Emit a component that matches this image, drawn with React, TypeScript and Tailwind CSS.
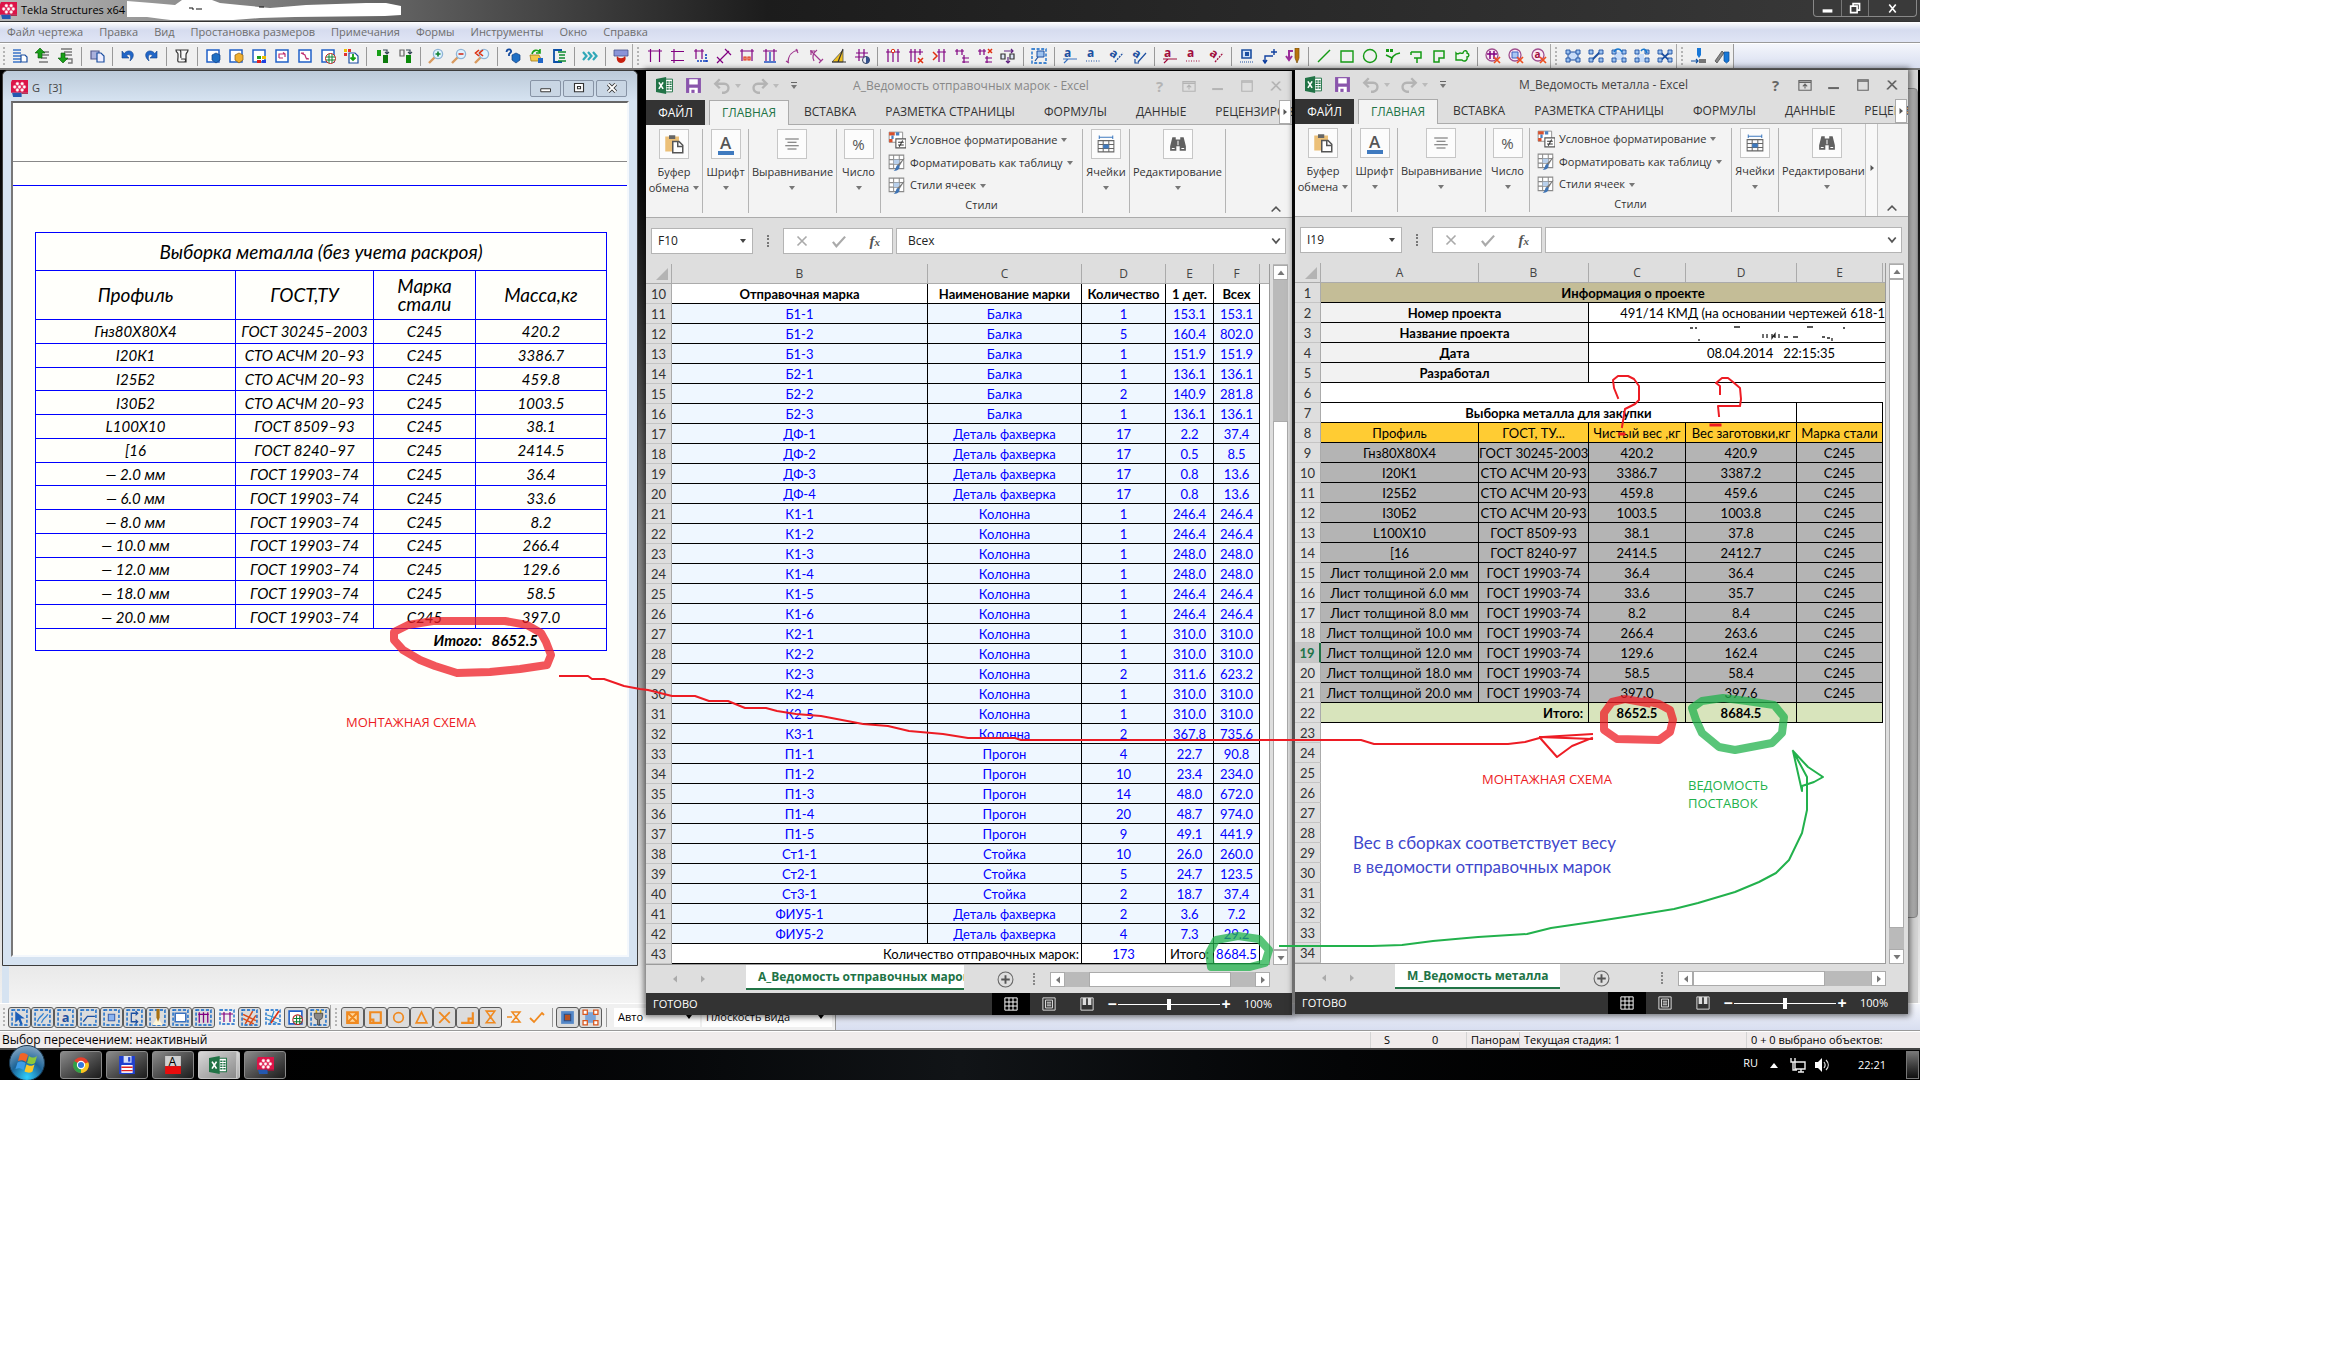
import type { ReactNode } from 'react'

/* ---------- small drawing helpers (16x16 grid) ---------- */

function Glyph({ children, size = 'h-[18px] w-[18px]' }: { children: ReactNode; size?: string }) {
  return (
    <svg viewBox="0 0 16 16" className={`${size} shrink-0`} fill="none" aria-hidden="true">
      {children}
    </svg>
  )
}

function L({ d, c = '#333', w = 1.2, f = 'none', dash }: { d: string; c?: string; w?: number; f?: string; dash?: string }) {
  return <path d={d} stroke={c} strokeWidth={w} fill={f} strokeDasharray={dash} />
}

const NAVY = '#1c4fa0'
const PURPLE = '#800080'
const GREEN = '#159a15'
const RED = '#e03010'

const dashBox = <L d="M1 1h14v14H1z" c="#0a64c8" dash="3 1.6" w={1.3} />
const cubes = <path d="M7 7l4-2 4 2v5l-4 3-4-3z" fill="#1f6fc4" stroke="#123f80" strokeWidth=".7" />
const frame = <L d="M2 2h12v12H2z" c="#2060c8" f="#fff" w={1.5} />

function lens(mark: ReactNode) {
  return (
    <>
      <L d="M1 15l6-6" c="#d89a60" w={2.4} />
      <circle cx="10" cy="6" r="4.6" fill="#dff2ff" stroke="#8fb4d6" strokeWidth="1.3" />
      {mark}
    </>
  )
}

function letterA(c: string, extra: ReactNode, turn?: boolean) {
  return (
    <>
      <text x="2" y="9" fill={c} fontSize="12" fontWeight="700" fontFamily="Open Sans, sans-serif" transform={turn ? 'rotate(35 5 6)' : undefined}>a</text>
      {extra}
    </>
  )
}

function redrawn(inner: ReactNode) {
  return (
    <>
      <circle cx="7" cy="7" r="6" stroke="#a05090" fill="#fbe9f4" strokeWidth="1.3" />
      {inner}
      <L d="M9 9l6 6M15 9l-6 6" c="#f05020" w={1.7} />
    </>
  )
}

function handles(inner: ReactNode) {
  return (
    <>
      {inner}
      <path d="M1 2h4v4H1zM11 2h4v4h-4zM1 10h4v4H1zM11 10h4v4h-4z" fill="#9cc2f0" stroke={NAVY} strokeWidth=".9" />
    </>
  )
}

type Tool = { name: string; icon: ReactNode; on?: boolean } | '|' | ':'

const topTools: Tool[] = [
  ':',
  { name: 'Список чертежей', icon: <><L d="M1 2h8M1 5h8M1 8h8M1 11h8M1 14h8" c="#3b74c8" w={1.4} /><L d="M9 7h4l2 2v5H9z" c={NAVY} f="#fff" /></> },
  { name: 'Предыдущий чертёж', icon: <><L d="M6 4h8M6 7h8M6 10h6M4 14h9" c="#777" w={1.4} /><path d="M5 0l5 5H7v5H3V5H0z" fill="#18a018" stroke="#075007" strokeWidth=".6" /></> },
  { name: 'Следующий чертёж', icon: <><L d="M3 1h11M6 4h8M6 7h8M8 11h6v4h-4" c="#777" w={1.4} /><path d="M5 15l5-5H7V5H3v5H0z" fill="#18a018" stroke="#075007" strokeWidth=".6" /></> },
  '|',
  { name: 'Сохранить', icon: <><L d="M2 3h8v8H2z" c="#555a90" f="#aab0dc" /><L d="M8 5h4l3 3v6H8z" c={NAVY} f="#eef" /></> },
  '|',
  { name: 'Отменить', icon: <path d="M2 3v7h7L6.500 7.800C9 5 12 7 10 13c6-5 3-11-2-10-2 .5-3 1.500-3.800 2.600z" fill="#2166c8" stroke="#12438c" strokeWidth=".6" /> },
  { name: 'Повторить', icon: <path d="M14 3v7H7l2.500-2.200C7 5 4 7 6 13 0 8 3 2 8 3c2 .5 3 1.500 3.800 2.600z" fill="#2166c8" stroke="#12438c" strokeWidth=".6" /> },
  '|',
  { name: 'Свойства', icon: <L d="M2 2h12c0 3-2 2-2 5v7H5c-2 0-1-3-1-5V6c0-2-2-1-2-4zM6 2c2 2 0 4 1 8M10 14c2 0 2-2 1-3H7" c="#333" f="#f8f8f8" /> },
  '|',
  { name: 'Вид модели', icon: <>{frame}{cubes}</> },
  { name: 'Вид по рамке', icon: <>{frame}<path d="M7 7l4-2 4 2v5l-4 3-4-3z" fill="#f0b030" stroke="#8a5a10" strokeWidth=".7" /></> },
  { name: 'Легенда', icon: <>{frame}<path d="M6 8h4v3H6z" fill="#20a020" /><path d="M11 8h4v3h-4z" fill="#f0c000" /><path d="M6 12h4v3H6z" fill="#e02020" /><path d="M11 12h4v3h-4z" fill="#2040e0" /></> },
  { name: 'Перенести', icon: <>{frame}<L d="M5 10V6h6v3M5 10h4M11 6L9 4.500" c="#c03070" /></> },
  { name: 'Масштаб вида', icon: <>{frame}<L d="M4 5l4 2 1 3 3 1M4 5h3M12 11H9" c="#c03070" /></> },
  { name: 'Сетка вида', icon: <>{frame}<circle cx="10.500" cy="10.500" r="5" fill="#fff" stroke="#c02020" /><L d="M6 9h9M6 12h9M9 6v9M12 6v9" c="#108030" w={1} /></> },
  { name: 'Обновить вид', icon: <><L d="M6 5h6l3 3v7H6z" c={NAVY} f="#fff" /><path d="M1 1h3v3H1z" fill="#f0c000" /><path d="M5 1h3v3H5zM1 5h3v3H1z" fill="#e03030" /><L d="M10 6v6M7.500 9.500L10 12l2.500-2.500" c="#10a010" w={1.8} /></> },
  '|',
  { name: 'Клонировать', icon: <><path d="M3 2h4v6H3z" fill="#18a018" /><path d="M9 7h5v8H9z" fill="#0c7a0c" /><L d="M9 2h4v3M11 4l2 2 2-2" c="#345" /></> },
  { name: 'Клонировать выбранное', icon: <><L d="M3 2h4v6H3z" c="#666" f="#eee" /><path d="M9 7h5v8H9z" fill="#0c8a0c" /><L d="M9 2h4v3M11 4l2 2 2-2" c="#345" /></> },
  '|',
  { name: 'Увеличить', icon: lens(<L d="M10 3.500v5M7.500 6h5" c="#108030" w={1.6} />) },
  { name: 'Уменьшить', icon: lens(<L d="M7.500 6h5" c="#d03020" w={1.6} />) },
  { name: 'Исходный масштаб', icon: lens(<L d="M5 2L1.500 5 5 8M9 2L5.500 5 9 8" c={RED} w={1.6} />) },
  '|',
  { name: 'Запрос объекта', icon: <><L d="M1.500 4C2 0 7 1 6 4L4 6v2" c="#124aa0" w={1.8} />{cubes}</> },
  { name: 'Открыть модель', icon: <><path d="M2 7h9l3 6H3z" fill="#f2c84c" stroke="#a07818" strokeWidth=".8" /><L d="M4 6c1-4 5-5 8-2M12 1v4H8" c="#18a018" w={1.6} /><path d="M10 10h5v5h-5z" fill="#2166c8" /></> },
  { name: 'Отчёт', icon: <><L d="M11 2H3v12h8" c="#0a50a8" w={1.8} /><L d="M7 4h8M8 7h6M8 10h6M7 13h8" c="#0f8a30" w={1.7} /></> },
  '|',
  { name: 'Дополнительно', icon: <L d="M1 4l3.500 4L1 12M6 4l3.500 4L6 12M11 4l3.500 4L11 12" c="#30a8b8" w={2.200} /> },
  '|',
  { name: 'Tekla Web', icon: <><path d="M1 2h14v6H1z" fill="#8a94d8" stroke="#44508c" strokeWidth=".8" /><path d="M4 8c2 3 6 3 8 0 2 4-1 7-4 7S3 12 4 8z" fill="#c82010" /></> },
  ':',
  { name: 'Размер по горизонтали', icon: <L d="M1 3h14M3.500 1v13M12.500 1v13" c={PURPLE} /> },
  { name: 'Размер по вертикали', icon: <L d="M4 1v14M1 3.500h13M1 12.500h13" c={PURPLE} /> },
  { name: 'Ортогональный размер', icon: <><L d="M1 3h10M3 1v10M9 1v10" c={PURPLE} /><L d="M13 6v9M4 13h11" c="#1040c0" dash="2 1" w={1.6} /></> },
  { name: 'Свободный размер', icon: <L d="M3 13L13 3M1 9l6 6M9 1l6 6M1 15l2-2" c={PURPLE} /> },
  { name: 'Размер по точкам', icon: <><L d="M1 3h14M3 1v12M13 1v12" c={PURPLE} /><L d="M5 9h2v3H5zM9 9h2v3H9z" c={RED} /></> },
  { name: 'Размер сетки', icon: <><L d="M1 3h14M4 1v12M12 1v12" c={PURPLE} /><L d="M8 4v9M2 14h12" c="#2050c0" w={1.4} /></> },
  { name: 'Радиус', icon: <L d="M3 15C3 7 8 3 13 2M1 13l3 2M11 1l2 4" c="#a03890" /> },
  { name: 'Радиальный размер', icon: <L d="M3 3l10 10M2 3h5M3 2v5M11 15l4-4M9 2C5 5 4 9 6 13" c="#a03890" /> },
  { name: 'Угол', icon: <><path d="M1 14L12 2v12z" fill="#f0c020" stroke="#555" strokeWidth=".8" /><L d="M1 14h14M12 1l-5 13" c="#333" /></> },
  { name: 'Добавить размер', icon: <><L d="M1 9h9M5 1v12M10 1v8M2 5h12" c={PURPLE} /><circle cx="12" cy="12" r="3.500" fill="#e8e8f4" stroke="#33405c" /><path d="M12 8.500v7a3.500 3.500 0 0 0 0-7z" fill="#33508c" /></> },
  '|',
  { name: 'Добавить точку', icon: <><L d="M1 4h14M3 1v13M8 3v11M13 1v13" c={PURPLE} /><circle cx="8" cy="3" r="1.700" fill="#fff" stroke={RED} /></> },
  { name: 'Удалить точку', icon: <><L d="M1 4h14M3 1v13M7 1v13M12 1v6" c={PURPLE} /><L d="M10 10l5 5M15 10l-5 5" c={RED} w={1.5} /></> },
  { name: 'Сдвинуть размер', icon: <><L d="M6 4h9M8 1v13M13 1v13" c={PURPLE} /><L d="M2 4l4 4-4 4" c={RED} w={1.5} /></> },
  { name: 'Объединить', icon: <L d="M1 3h9M3 1v6M8 1v6M10 7v8M8 10h7M8 14h7" c={PURPLE} /> },
  { name: 'Разделить', icon: <><L d="M1 3h8M3 1v6M7 1v6M10 8v7M8 10h7M8 14h7" c={PURPLE} /><L d="M11 1l4 4M15 1l-4 4" c={RED} w={1.5} /></> },
  { name: 'Связать размеры', icon: <><L d="M1 6h4v5H1zM10 6h4v5h-4z" c="#333" f="#dde4f4" /><L d="M4 3h9M11 1l2 2-2 2M8 9v6M6 13l2 2 2-2" c="#602080" /></> },
  '|',
  { name: 'Марка детали', icon: <>{dashBox}<path d="M6 3h7v6H6z" fill="#9cc2f0" stroke={NAVY} /><L d="M4 13l3-4" c={NAVY} /></> },
  '|',
  { name: 'Текст с выноской', icon: letterA(NAVY, <L d="M2 15l4-4h9M1 11h5" c="#3a72c0" />) },
  { name: 'Текст', icon: letterA(NAVY, <L d="M1 13h14" c={NAVY} dash="1 1.500" />) },
  { name: 'Текст вдоль линии', icon: letterA(NAVY, <L d="M7 14l8-9" c={NAVY} dash="2 1" />, true) },
  { name: 'Текст с поворотом', icon: letterA(NAVY, <L d="M7 14l8-9M4 11v4h4" c={NAVY} />, true) },
  '|',
  { name: 'Сварной шов', icon: letterA('#a00c3c', <L d="M2 15l4-4h9M1 11h5" c="#a00c3c" />) },
  { name: 'Метка шва', icon: letterA('#a00c3c', <L d="M1 13h14" c="#a00c3c" dash="1 1.500" />) },
  { name: 'Метка вдоль шва', icon: letterA('#a00c3c', <L d="M7 14l8-9" c="#a00c3c" dash="2 1" />, true) },
  '|',
  { name: 'Символ', icon: <><L d="M3 2h9v8H3z" c={NAVY} f="#cfe0f8" w={1.6} /><path d="M6 4h4v4H6z" fill={NAVY} /><L d="M1 14h14" c={NAVY} dash="1 1" /></> },
  { name: 'Отметка уровня', icon: <L d="M3 15V8h8M1 12l2 3 2-3M12 1v6M9 4h6" c="#1040a0" w={1.4} /> },
  { name: 'Ревизия', icon: <><L d="M8 3H4v8M1 8l3 4 3-4" c="#9a2c9a" w={2} /><path d="M10 0h4v10l-2 5-2-5z" fill="#b8740c" stroke="#7a5010" strokeWidth=".7" /></> },
  '|',
  { name: 'Линия', icon: <L d="M2 14L14 2" c={GREEN} w={1.4} /> },
  { name: 'Прямоугольник', icon: <L d="M2 3h12v11H2z" c={GREEN} w={1.4} /> },
  { name: 'Окружность', icon: <circle cx="8" cy="8" r="6.500" stroke={GREEN} strokeWidth="1.400" /> },
  { name: 'Дуга', icon: <><L d="M6 15c0-5 3-9 9-10M1 7l6 3" c={GREEN} w={1.5} /><path d="M1 1h3v3H1zM5 1h3v3H5z" fill={GREEN} /></> },
  { name: 'Полилиния', icon: <L d="M3 4h10v6H9v5M3 4v3M6 10h3" c={GREEN} w={1.5} /> },
  { name: 'Многоугольник', icon: <L d="M3 3h10v7H8v4H3z" c={GREEN} w={1.5} /> },
  { name: 'Облако', icon: <L d="M2 12V5c2 2 3 0 4 0s1 1 3 0c1-4 5-2 4 0 3 1 2 4 0 4 1 4-3 5-5 3H4z" c={GREEN} w={1.4} f="#eef8ee" /> },
  '|',
  { name: 'Переразметить размеры', icon: redrawn(<L d="M2 6h10M5 3v8M9 3v8" c={PURPLE} w={1.500} />) },
  { name: 'Переразметить марки', icon: redrawn(<path d="M4 4h6v6H4z" fill="#a9c8f4" stroke="#4060c0" />) },
  { name: 'Переразметить тексты', icon: redrawn(<text x="3.500" y="10" fill="#a00c3c" fontSize="10" fontWeight="700" fontFamily="Open Sans, sans-serif">a</text>) },
  ':',
  { name: 'Прямоугольная область', icon: handles(<path d="M3 4h10v8H3z" fill="#c8dcf8" stroke={NAVY} />) },
  { name: 'Подогнать область', icon: handles(<L d="M4 12l8-8" c={NAVY} w={2} />) },
  { name: 'Повернуть область', icon: <>{handles(<path d="M3 4h10v8H3z" fill="#c8dcf8" />)}<L d="M3 4c2-4 6-4 8 0" c="#1878d0" w={1.600} /></> },
  { name: 'Копировать область', icon: <>{handles(<path d="M3 6h7v8H3z" fill="#c8dcf8" />)}<L d="M7 3c2-3 5-2 6 2" c="#1878d0" w={1.600} /></> },
  { name: 'Разнести область', icon: handles(<L d="M3 4l10 9M13 4L3 13" c={NAVY} w={1.700} />) },
  ':',
  { name: 'Сверло', icon: <><path d="M6 0h4v7L8 10 6 7z" fill="#1878d8" /><path d="M8 11h7v4H8z" fill="#777" /><L d="M0 13h7M5 11l2 2-2 2" c="#1050a0" /></> },
  { name: 'Болт', icon: <><path d="M1 13L8 3l2 2-7 10z" fill="#888" stroke="#444" strokeWidth=".7" /><path d="M10 4h5v9l-2.500 2L10 13z" fill="#1878d8" stroke="#104a90" strokeWidth=".7" /></> },
]

function snapIcon(inner: ReactNode) {
  return <>{dashBox}{inner}</>
}

const ORANGE = '#f08a20'

const bottomTools: Tool[] = [
  ':',
  { name: 'Выбрать всё', on: true, icon: snapIcon(<path d="M4 2l9 7H9l2 5-2 1-2-5-3 3z" fill="#1c5fb8" />) },
  { name: 'Выбрать линии', on: true, icon: snapIcon(<L d="M3 12c2-6 4-4 6-8M7 13c2-6 4-4 6-8" c="#3080d0" />) },
  { name: 'Выбрать текст', on: true, icon: snapIcon(<text x="4.500" y="12" fill={NAVY} fontSize="12" fontWeight="700" fontFamily="Open Sans, sans-serif">a</text>) },
  { name: 'Выбрать метки', on: true, icon: snapIcon(<L d="M3 12l4-5h7" c={NAVY} />) },
  { name: 'Выбрать детали', on: true, icon: snapIcon(<path d="M5 5h6v6H5z" fill="#8ab4f0" stroke="#3a62b0" />) },
  { name: 'Выбрать сечения', on: true, icon: snapIcon(<L d="M10 4H5v8h5M9 2l2 2-2 2M9 10l2 2-2 2" c={NAVY} />) },
  { name: 'Выбрать швы', on: true, icon: snapIcon(<><path d="M8 8l5 7H3z" fill="#fff6d8" /><path d="M7 0h3v8l-1.500 4L7 8z" fill="#a87010" /></>) },
  { name: 'Выбрать виды', on: true, icon: snapIcon(<L d="M3 4h10v8H3z" c="#3a72c0" f="#fff" w={1.500} />) },
  { name: 'Выбрать размеры', on: true, icon: snapIcon(<L d="M3 5h10M4 3v10M8 3v10M12 3v10" c={PURPLE} />) },
  { name: 'Выбрать один размер', icon: snapIcon(<L d="M2 5h12M5 3v10M11 3v10" c={PURPLE} />) },
  { name: 'Выбрать сетки', on: true, icon: snapIcon(<L d="M4 14l7-12M8 15l6-9M2 5l12 6M2 9l10 5" c="#d84818" w={1.400} />) },
  { name: 'Выбрать линию сетки', icon: snapIcon(<><L d="M2 6l12 4M2 10l10 4M5 14l4-12" c="#3090d0" /><L d="M6 14l8-12" c={RED} w={1.600} /></>) },
  { name: 'Выбрать символы', on: true, icon: <>{frame}<circle cx="10" cy="10" r="4.500" fill="#fff" stroke="#c02020" /><L d="M6 9h8M6 12h8M9 6v8M12 6v8" c="#108030" w={1} /></> },
  { name: 'Выбрать плагины', on: true, icon: snapIcon(<><L d="M6 4V1M10 4V1" c="#d8a818" w={1.500} /><path d="M4 4h8c0 5-1 6-3 6v5H7v-5C5 10 4 9 4 4z" fill="#888" stroke="#333" strokeWidth=".7" /></>) },
  ':',
  { name: 'Привязка к точкам', on: true, icon: <L d="M3 3h10v10H3zM3 3l10 10M13 3L3 13" c={ORANGE} w={2} f="#ffd9a0" /> },
  { name: 'Привязка к концам', on: true, icon: <L d="M3 3h10v10H3zM3 10h3v3" c={ORANGE} w={2} /> },
  { name: 'Привязка к центру', on: true, icon: <circle cx="8" cy="8" r="4.500" stroke={ORANGE} strokeWidth="1.600" /> },
  { name: 'Привязка к середине', on: true, icon: <L d="M8 3l5 10H3z" c={ORANGE} w={1.600} /> },
  { name: 'Привязка к пересечению', on: true, icon: <L d="M3 3l10 10M13 3L3 13" c={ORANGE} w={1.700} /> },
  { name: 'Привязка по перпендикуляру', on: true, icon: <L d="M2 13h11V3M9 13V9h4" c={ORANGE} w={2} /> },
  { name: 'Привязка к ближайшей', on: true, icon: <L d="M4 2h8l-8 11h8z" c={ORANGE} w={1.500} /> },
  { name: 'Привязка к продолжению', icon: <L d="M6 3h8l-8 10h8zM1 8h5" c={ORANGE} w={1.500} /> },
  { name: 'Свободная привязка', icon: <L d="M1 9l4 4 8-9 2 2" c={ORANGE} w={1.800} /> },
  '|',
  { name: 'Привязка к линиям', on: true, icon: <><path d="M2 2h12v12H2z" fill="#5588c8" /><path d="M5 5h6v6H5z" fill="#b85020" stroke="#2a4a80" /></> },
  { name: 'Привязка к опорным линиям', on: true, icon: <><path d="M3 3h10v10H3z" fill="#7aa4d8" /><L d="M1 1h4v4H1zM11 1h4v4h-4zM1 11h4v4H1zM11 11h4v4h-4z" c="#d85820" f="#fff" /></> },
  '|',
]

function Toolbar({ tools }: { tools: Tool[] }) {
  return (
    <>
      {tools.map((t, i) =>
        t === '|' ? (
          <span key={i} className="flex w-2 shrink-0 justify-center"><span className="h-[19px] w-px bg-[#999]" /></span>
        ) : t === ':' ? (
          <span key={i} className="flex h-6 w-[11px] shrink-0 items-center justify-center border-l border-[#a8a8a8] first:w-2 first:border-l-0">
            <span className="h-[18px] border-l-2 border-dotted border-[#b4b4b4]" />
          </span>
        ) : (
          <button
            key={i}
            type="button"
            aria-label={t.name}
            className={t.on
              ? 'flex h-[21px] w-[23px] shrink-0 items-center justify-center rounded-[3px] border border-[#5c5c5c] bg-[#dcdcdc]'
              : 'flex h-[21px] w-[23px] shrink-0 items-center justify-center'}
          >
            <Glyph size={t.on ? 'h-[17px] w-[17px]' : 'h-4 w-4'}>{t.icon}</Glyph>
          </button>
        ),
      )}
    </>
  )
}

function TeklaLogo() {
  return (
    <Glyph size="h-[17px] w-[17px]">
      <path d="M1 0h15v12H0V2z" fill="#dc1448" />
      <path d="M1 12h9v4H2z" fill="#2458b0" />
      <path d="M10 12h6v1h-6z" fill="#a81038" />
      <g fill="#fff" stroke="#f7b4c4" strokeWidth=".5">
        <circle cx="6" cy="3.500" r="1.400" /><circle cx="10.500" cy="3.500" r="1.400" />
        <circle cx="3.500" cy="6.500" r="1.400" /><circle cx="8" cy="6.500" r="1.400" /><circle cx="12.500" cy="6.500" r="1.400" />
        <circle cx="6" cy="9.500" r="1.400" /><circle cx="10.500" cy="9.500" r="1.400" />
      </g>
    </Glyph>
  )
}

function ExcelLogo({ size = 'h-[17px] w-[17px]' }: { size?: string }) {
  return (
    <Glyph size={size}>
      <path d="M8 2h7.500v12H8z" fill="#fff" stroke="#217346" strokeWidth=".9" />
      <path d="M10 4h2v1.300h-2zM12.700 4h2v1.300h-2zM10 6.200h2v1.300h-2zM12.700 6.200h2v1.300h-2zM10 8.400h2v1.300h-2zM12.700 8.400h2v1.300h-2zM10 10.600h2v1.300h-2zM12.700 10.600h2v1.300h-2z" fill="#217346" />
      <path d="M0 1.800L9.500 0v16L0 14.200z" fill="#217346" />
      <L d="M2.700 5l4 6.200M6.700 5l-4 6.200" c="#fff" w={1.500} />
    </Glyph>
  )
}

function Caret({ tone = 'text-[#777]' }: { tone?: string }) {
  return (
    <svg viewBox="0 0 6 4" className={`h-[4px] w-[6px] shrink-0 ${tone}`} aria-hidden="true">
      <path d="M0 0h6L3 4z" fill="currentColor" />
    </svg>
  )
}

/* ---------- drawing window ---------- */

const drawingRows = [
  ['Гнз80Х80Х4', 'ГОСТ 30245–2003', '420.2'],
  ['I20К1', 'СТО АСЧМ 20–93', '3386.7'],
  ['I25Б2', 'СТО АСЧМ 20–93', '459.8'],
  ['I30Б2', 'СТО АСЧМ 20–93', '1003.5'],
  ['L100X10', 'ГОСТ 8509–93', '38.1'],
  ['[16', 'ГОСТ 8240–97', '2414.5'],
  ['— 2.0 мм', 'ГОСТ 19903–74', '36.4'],
  ['— 6.0 мм', 'ГОСТ 19903–74', '33.6'],
  ['— 8.0 мм', 'ГОСТ 19903–74', '8.2'],
  ['— 10.0 мм', 'ГОСТ 19903–74', '266.4'],
  ['— 12.0 мм', 'ГОСТ 19903–74', '129.6'],
  ['— 18.0 мм', 'ГОСТ 19903–74', '58.5'],
  ['— 20.0 мм', 'ГОСТ 19903–74', '397.0'],
]

function DrawingWindow() {
  const button = 'flex h-[17px] w-[31px] items-center justify-center rounded-[2px] border border-[#8793a5] bg-[#c9d6e4] text-[#333]'
  const cell = 'border border-[#0000ff] p-0 text-center font-normal whitespace-nowrap'
  return (
    <section className="flex w-[636px] shrink-0 flex-col rounded-t-md border border-[#3c3c3c] bg-[#d6e3f1] px-2 pb-2">
      <header className="-mx-2 flex h-[30px] items-center rounded-t-md bg-linear-to-b from-[#bccad9] to-[#d6e3f1] pt-1 pr-[10px] pl-2">
        <TeklaLogo />
        <h2 className="ml-1 flex-1 whitespace-pre text-[#444]">G   [3]</h2>
        <div className="flex gap-[2px]">
          <button type="button" aria-label="Свернуть чертёж" className={button}><Glyph size="h-3 w-3"><L d="M1 9h13v4H1z" f="#fff" w={1.300} /></Glyph></button>
          <button type="button" aria-label="Развернуть чертёж" className={button}><Glyph size="h-3 w-3"><L d="M2 2h12v11H2zM6 6h4v3H6z" f="#fff" w={1.500} /></Glyph></button>
          <button type="button" aria-label="Закрыть чертёж" className={button}><Glyph size="h-3 w-3"><L d="M3 3l10 10M13 3L3 13" w={5} /><L d="M3 3l10 10M13 3L3 13" c="#fff" w={2.500} /></Glyph></button>
        </div>
      </header>
      <div className="flex-1 border-2 border-t-[#666] border-r-[#f4f8fc] border-b-[#f4f8fc] border-l-[#777] bg-[#fffffb]">
        <div className="mt-[58px] h-px bg-[#888]" />
        <div className="mt-[23px] h-px bg-[#0000ff]" />
        <table className="mt-[46px] ml-[22px] h-[419px] w-[572px] table-fixed border-collapse font-['Lato',sans-serif] text-[15px] leading-[18px] text-black italic">
          <colgroup>
            <col className="w-[200px]" /><col className="w-[138px]" /><col className="w-[102px]" /><col />
          </colgroup>
          <thead className="text-[19px]">
            <tr className="h-[38px]"><th colSpan={4} className={cell}>Выборка металла (без учета раскроя)</th></tr>
            <tr className="h-[49px]">
              <th className={cell}>Профиль</th>
              <th className={cell}>ГОСТ,ТУ</th>
              <th className={cell}>Марка<br />стали</th>
              <th className={cell}>Масса,кг</th>
            </tr>
          </thead>
          <tbody>
            {drawingRows.map(([profile, gost, mass]) => (
              <tr key={profile} className="h-[23px]">
                <td className={cell}>{profile}</td>
                <td className={cell}>{gost}</td>
                <td className={cell}>С245</td>
                <td className={cell}>{mass}</td>
              </tr>
            ))}
          </tbody>
          <tfoot>
            <tr className="h-[22px] font-bold">
              <td colSpan={4} className="border border-[#0000ff] p-0 pr-[68px] text-right whitespace-pre">Итого:   8652.5</td>
            </tr>
          </tfoot>
        </table>
      </div>
    </section>
  )
}

/* ---------- Excel window ---------- */

const tabs = ['ВСТАВКА', 'РАЗМЕТКА СТРАНИЦЫ', 'ФОРМУЛЫ', 'ДАННЫЕ', 'РЕЦЕНЗИРОВАНИЕ']

function BigCommand({ label, second, width, icon }: { label: string; second?: string; width: string; icon: ReactNode }) {
  return (
    <div className={`flex h-[84px] shrink-0 justify-center border-r border-[#b4b4b4] ${width}`}>
      <button type="button" className="flex flex-col items-center">
        <span className="flex h-[30px] w-[30px] items-center justify-center border border-[#c6c6c6] bg-[#fcfcfc]">{icon}</span>
        <span className="mt-[5px] leading-4 whitespace-nowrap">{label}</span>
        <span className="flex h-4 items-center gap-1 leading-4">{second}<Caret /></span>
      </button>
    </div>
  )
}

function StyleCommand({ label, icon }: { label: string; icon: ReactNode }) {
  return (
    <button type="button" className="flex h-[23px] items-center gap-1">
      <Glyph>{icon}</Glyph>
      <span className="whitespace-nowrap">{label}</span>
      <Caret />
    </button>
  )
}

const brushTable = (
  <>
    <L d="M1 1h13v12H1zM1 5h13M1 9h9M5 1v12M10 1v8" c="#8a8a8a" f="#fff" w={0.900} />
    <path d="M5 5h5v4H5z" fill="#b8d0ec" />
    <path d="M15 3l-5 8-2-1z" fill="#777" />
    <path d="M10 10c1 3-1 5-5 5 2-1 2-4 3-5z" fill="#3f74b4" />
  </>
)

function Ribbon({ scrolled }: { scrolled?: boolean }) {
  return (
    <div className="relative flex h-[93px] overflow-hidden border-b border-[#ababab] bg-[#f3f3f3] pt-1 text-[#333]">
      <BigCommand
        label="Буфер" second="обмена" width="w-[57px]"
        icon={<Glyph size="h-5 w-5"><path d="M1 2h11v12H1z" fill="#ecc078" /><path d="M4 1h5v3H4z" fill="#666" /><L d="M7 6h5l3 3v6H7z" c="#555" f="#fff" /><L d="M11 6v4h4" c="#555" /></Glyph>}
      />
      <BigCommand
        label="Шрифт" width="w-[46px]"
        icon={<span className="flex flex-col items-center text-[17px] leading-[17px] font-semibold text-[#555]">А<span className="h-1 w-4 bg-[#3f7abf]" /></span>}
      />
      <BigCommand
        label="Выравнивание" width="w-[88px]"
        icon={<Glyph><L d="M2 3.500h12M4 6.500h8M2 9.500h12M4 12.500h8" c="#666" w={0.900} /></Glyph>}
      />
      <BigCommand label="Число" width="w-[44px]" icon={<span className="text-[15px] text-[#555]">%</span>} />
      <div className="flex h-[84px] w-[202px] shrink-0 flex-col border-r border-[#b4b4b4] pl-[7px]">
        <StyleCommand label="Условное форматирование" icon={<><path d="M1 1h12v9H1z" fill="#fff" stroke="#8a8a8a" strokeWidth=".8" /><path d="M1 1h5v3H1zM1 7h3v3H1z" fill="#d8502c" /><path d="M7 1h3v3H7zM3 4h2v3H3z" fill="#4a80c0" /><path d="M7 7h9v8H7z" fill="#fff" stroke="#555" /><L d="M9 10h5M9 12.500h5M13 8.500l-3 5.500" c="#333" w={0.900} /></>} />
        <StyleCommand label="Форматировать как таблицу" icon={brushTable} />
        <StyleCommand label="Стили ячеек" icon={brushTable} />
        <p className="-ml-[7px] text-center leading-4">Стили</p>
      </div>
      <BigCommand
        label="Ячейки" width="w-[47px]"
        icon={<Glyph><L d="M2 2h12M2 .5v3M14 .5v3" c="#3f7abf" w={0.900} /><L d="M1 5h14v10H1zM1 8.500h14M1 12h14M5.500 5v10M10.500 5v10" c="#666" w={0.900} /><path d="M5.500 8.500h5V12h-5z" fill="#3f7abf" /></Glyph>}
      />
      <BigCommand
        label="Редактирование" width="w-[96px]"
        icon={<Glyph><path d="M3 2h3v2h4V2h3l2 8v4H9.500v-4h-3v4H1v-4z" fill="#606060" /><L d="M2.500 12h2.500M11 12h2.500M8 5v4" c="#fff" w={0.900} /></Glyph>}
      />
      {scrolled && (
        <button type="button" aria-label="Прокрутить ленту" className="absolute top-0 right-[30px] flex h-full w-[13px] items-center justify-center border-x border-[#c6c6c6] bg-[#f8f8f8] pb-1 text-[#555]">
          <Glyph size="h-2 w-2"><path d="M5 2l7 6-7 6z" fill="#555" /></Glyph>
        </button>
      )}
      <button type="button" aria-label="Свернуть ленту" className="absolute right-[11px] bottom-[3px]">
        <Glyph size="h-[10px] w-[10px]"><L d="M1 12l7-7 7 7" c="#555" w={2.500} /></Glyph>
      </button>
    </div>
  )
}

type ExcelProps = {
  title: string
  place: string
  dim?: boolean
  cellRef: string
  formula: string
  scrolled?: boolean
  sheet: string
  sheetTab: string
  vThumb: ReactNode
  hThumb: ReactNode
  children: ReactNode
}

function ExcelWindow({ title, place, dim, cellRef, formula, scrolled, sheet, sheetTab, vThumb, hThumb, children }: ExcelProps) {
  const ink = dim ? 'text-[#b4b4b4]' : 'text-[#666]'
  const arrow = 'flex h-[15px] w-[15px] shrink-0 items-center justify-center border border-[#ababab] bg-white'
  return (
    <section className={`absolute flex flex-col bg-[#dedede] text-[11px] shadow-[0_0_6px_2px_rgba(0,0,0,0.55)] ${place}`}>
      <header className="flex h-[29px] items-center pr-[2px] pl-[10px]">
        <ExcelLogo />
        <button type="button" aria-label="Сохранить книгу" className="mr-[11px] ml-3">
          <Glyph size="h-[17px] w-[17px]"><path d="M1 1h14v14H1z" fill="#8a55ac" /><path d="M4 2h8v5H4zM4 10h8v5H4z" fill="#fff" /><path d="M6 12h3v3H6z" fill="#8a55ac" /></Glyph>
        </button>
        <button type="button" aria-label="Отменить ввод" className="mr-[10px] flex items-center gap-1">
          <Glyph><L d="M6 2L2 6l4 4M2 6h8c5 0 5 7 0 8H8" c="#b4b4b4" w={2.100} /></Glyph><Caret tone="text-[#bbb]" />
        </button>
        <button type="button" aria-label="Вернуть ввод" className="flex items-center gap-1">
          <Glyph><L d="M10 2l4 4-4 4M14 6H6C1 6 1 13 6 14h2" c="#b4b4b4" w={2.100} /></Glyph><Caret tone="text-[#bbb]" />
        </button>
        <button type="button" aria-label="Настройка панели быстрого доступа" className="ml-3 flex flex-col items-center gap-[2px]">
          <span className="h-px w-[6px] bg-[#666]" /><Caret />
        </button>
        <h2 className={`flex-1 truncate text-center text-xs ${dim ? 'text-[#888]' : 'text-[#444]'}`}>{title}</h2>
        <div className={`flex ${ink}`}>
          <button type="button" aria-label="Справка Excel" className="w-[29px] text-[15px] leading-5 font-bold">?</button>
          {[
            ['Параметры ленты', 'M1 3h14v11H1zM1 5h14M8 12V7M5.500 9.500L8 7l2.500 2.500'],
            ['Свернуть', 'M2 11h11v1H2z'],
            ['Развернуть', 'M2 2h12v12H2zM2 3.500h12'],
            ['Закрыть', 'M3 3l10 10M13 3L3 13M4 3l10 10M12 3L2 13'],
          ].map(([name, d]) => (
            <button key={name} type="button" aria-label={name} className="flex w-[29px] items-center justify-center">
              <Glyph size="h-[14px] w-[14px]"><L d={d} c="currentColor" w={1.300} /></Glyph>
            </button>
          ))}
        </div>
      </header>

      <nav className="relative flex h-[25px] items-stretch overflow-hidden text-xs text-[#333]">
        <button type="button" className="mr-1 w-[59px] shrink-0 bg-[#333] text-white">ФАЙЛ</button>
        <button type="button" className="relative z-10 w-[80px] shrink-0 border border-b-0 border-[#ababab] bg-[#f3f3f3] text-[#217346]">ГЛАВНАЯ</button>
        {tabs.map((t) => (
          <button key={t} type="button" className="shrink-0 border-b border-[#ababab] pr-[14px] pl-[15px]">{t}</button>
        ))}
        <button type="button" aria-label="Следующие вкладки" className="absolute top-0 right-[1px] z-10 flex h-6 w-[12px] items-center justify-center border border-[#ababab] bg-white">
          <Glyph size="h-2 w-2"><path d="M5 2l7 6-7 6z" fill="#555" /></Glyph>
        </button>
      </nav>

      <Ribbon scrolled={scrolled} />

      <div className="flex h-[46px] items-center pr-[6px] pl-[5px] text-xs text-[#222]">
        <div className="relative flex h-[26px] w-[102px] items-center border border-[#b4b4b4] bg-white">
          <input aria-label="Имя ячейки" defaultValue={cellRef} className="w-full bg-transparent pl-[6px] outline-none" />
          <span className="absolute right-[6px]"><Caret tone="text-[#444]" /></span>
        </div>
        <span className="mx-[14px] h-3 border-l-2 border-dotted border-[#777]" />
        <div className="mr-[3px] flex h-[26px] w-[110px] items-center justify-around border border-[#b4b4b4] bg-white">
          <button type="button" aria-label="Отмена"><Glyph size="h-3 w-3"><L d="M2 2l12 12M14 2L2 14" c="#aaa" w={2.200} /></Glyph></button>
          <button type="button" aria-label="Ввод"><Glyph size="h-[14px] w-[14px]"><L d="M1 9l4 5L15 3" c="#aaa" w={2.500} /></Glyph></button>
          <button type="button" className="font-['Liberation_Serif',serif] text-[15px] leading-4 font-bold text-[#555] italic" aria-label="Вставить функцию">f<span className="text-[11px]">x</span></button>
        </div>
        <div className="relative flex h-[26px] min-w-0 flex-1 items-center border border-[#b4b4b4] bg-white">
          <input aria-label="Строка формул" defaultValue={formula} className="w-full bg-transparent pl-[11px] outline-none" />
          <span className="absolute right-1"><Glyph size="h-[10px] w-[10px]"><L d="M2 4l6 7 6-7" c="#555" w={2.800} /></Glyph></span>
        </div>
      </div>

      <div className="flex pr-1">
        <div className="min-w-0 flex-1 overflow-hidden border-r border-b border-[#9b9b9b]">{children}</div>
        <div className="ml-[3px] flex w-[15px] flex-col bg-[#bababa] pt-[1px]">
          <button type="button" aria-label="Прокрутить вверх" className={arrow}><Glyph size="h-2 w-2"><path d="M1 12l7-9 7 9z" fill="#777" /></Glyph></button>
          {vThumb}
          <button type="button" aria-label="Прокрутить вниз" className={arrow}><Glyph size="h-2 w-2"><path d="M1 4l7 9 7-9z" fill="#777" /></Glyph></button>
        </div>
      </div>

      <div className="flex h-7 items-start pr-[22px]">
        <button type="button" aria-label="Предыдущий лист" className="mt-[10px] ml-[25px]"><Glyph size="h-2 w-2"><path d="M12 1L4 8l8 7z" fill="#aaa" /></Glyph></button>
        <button type="button" aria-label="Следующий лист" className="mt-[10px] ml-5"><Glyph size="h-2 w-2"><path d="M4 1l8 7-8 7z" fill="#aaa" /></Glyph></button>
        <button type="button" className={`ml-[39px] h-[25px] overflow-hidden border-b-2 border-[#217346] bg-white text-left text-xs font-bold whitespace-nowrap text-[#217346] ${sheetTab}`}>{sheet}</button>
        <button type="button" aria-label="Новый лист" className="mt-[6px]">
          <Glyph size="h-[17px] w-[17px]"><circle cx="8" cy="8" r="7" stroke="#666" /><L d="M8 4v8M4 8h8" c="#555" w={1.800} /></Glyph>
        </button>
        <span className="mt-2 ml-auto h-3 border-l-2 border-dotted border-[#888]" />
        <div className={`mt-[7px] ml-[15px] flex h-[15px] bg-[#bababa] ${dim ? 'w-[220px]' : 'w-[208px]'}`}>
          <button type="button" aria-label="Прокрутить влево" className={arrow}><Glyph size="h-2 w-2"><path d="M12 1L4 8l8 7z" fill="#777" /></Glyph></button>
          {hThumb}
          <button type="button" aria-label="Прокрутить вправо" className={arrow}><Glyph size="h-2 w-2"><path d="M4 1l8 7-8 7z" fill="#777" /></Glyph></button>
        </div>
      </div>

      <footer className="flex h-[22px] items-center bg-[#333] pr-5 pl-[7px] text-white">
        <span className="flex-1">ГОТОВО</span>
        <button type="button" aria-label="Обычный" className="flex h-[22px] w-[38px] items-center justify-center bg-black">
          <Glyph size="h-[14px] w-[14px]"><L d="M1 1h14v14H1zM1 5.700h14M1 10.300h14M5.700 1v14M10.300 1v14" c="#fff" w={1.100} /></Glyph>
        </button>
        <button type="button" aria-label="Разметка страницы" className="flex h-[22px] w-[38px] items-center justify-center">
          <Glyph size="h-[14px] w-[14px]"><L d="M1 1h14v14H1zM4 3.500h8v9H4zM5.500 6h5M5.500 8h5M5.500 10h5" c="#ddd" w={1.100} /></Glyph>
        </button>
        <button type="button" aria-label="Страничный режим" className="flex h-[22px] w-[38px] items-center justify-center">
          <Glyph size="h-[14px] w-[14px]"><L d="M1 1h14v14H1z" c="#ddd" w={1.100} /><path d="M3 1h4v8H3zM9 1h4v8H9z" fill="#ddd" /></Glyph>
        </button>
        <button type="button" aria-label="Уменьшить масштаб" className="w-3 text-base leading-4 font-bold">−</button>
        <input
          type="range"
          aria-label="Масштаб"
          min={0}
          max={200}
          defaultValue={100}
          className="h-[14px] w-[102px] appearance-none bg-transparent [&::-webkit-slider-runnable-track]:h-px [&::-webkit-slider-runnable-track]:bg-white [&::-webkit-slider-thumb]:mt-[-5px] [&::-webkit-slider-thumb]:h-[11px] [&::-webkit-slider-thumb]:w-1 [&::-webkit-slider-thumb]:appearance-none [&::-webkit-slider-thumb]:bg-white"
        />
        <button type="button" aria-label="Увеличить масштаб" className="w-3 text-base leading-4 font-bold">+</button>
        <span className="ml-3 text-right">100%</span>
      </footer>
    </section>
  )
}

function SheetHead({ letters }: { letters: string[] }) {
  return (
    <thead>
      <tr className="h-5 bg-[#dedede] font-['Open_Sans',sans-serif] text-xs leading-4 text-[#444]">
        <th className="border-r border-b border-[#ababab] p-0">
          <svg viewBox="0 0 12 12" className="ml-[10px] h-3 w-3" aria-hidden="true"><path d="M12 0v12H0z" fill="#b4b4b4" /></svg>
        </th>
        {letters.map((c) => (
          <th key={c} className="border-r border-b border-[#ababab] p-0 font-normal">{c}</th>
        ))}
        <th className="border-b border-[#ababab] p-0" aria-label="Пустой столбец" />
      </tr>
    </thead>
  )
}

const rowHead = 'border-r border-b border-r-[#ababab] border-b-[#c4c4c4] bg-[#dedede] p-0 text-center font-normal text-[#333]'
const sheetTable = "w-full table-fixed border-separate border-spacing-0 bg-white font-['Lato',sans-serif] text-[13px] leading-4 text-black"
const line = 'border-r border-b border-black p-0 text-center whitespace-nowrap overflow-hidden'

const marks: [string, string, number, string, string][] = [
  ['Б1-1', 'Балка', 1, '153.1', '153.1'],
  ['Б1-2', 'Балка', 5, '160.4', '802.0'],
  ['Б1-3', 'Балка', 1, '151.9', '151.9'],
  ['Б2-1', 'Балка', 1, '136.1', '136.1'],
  ['Б2-2', 'Балка', 2, '140.9', '281.8'],
  ['Б2-3', 'Балка', 1, '136.1', '136.1'],
  ['ДФ-1', 'Деталь фахверка', 17, '2.2', '37.4'],
  ['ДФ-2', 'Деталь фахверка', 17, '0.5', '8.5'],
  ['ДФ-3', 'Деталь фахверка', 17, '0.8', '13.6'],
  ['ДФ-4', 'Деталь фахверка', 17, '0.8', '13.6'],
  ['К1-1', 'Колонна', 1, '246.4', '246.4'],
  ['К1-2', 'Колонна', 1, '246.4', '246.4'],
  ['К1-3', 'Колонна', 1, '248.0', '248.0'],
  ['К1-4', 'Колонна', 1, '248.0', '248.0'],
  ['К1-5', 'Колонна', 1, '246.4', '246.4'],
  ['К1-6', 'Колонна', 1, '246.4', '246.4'],
  ['К2-1', 'Колонна', 1, '310.0', '310.0'],
  ['К2-2', 'Колонна', 1, '310.0', '310.0'],
  ['К2-3', 'Колонна', 2, '311.6', '623.2'],
  ['К2-4', 'Колонна', 1, '310.0', '310.0'],
  ['К2-5', 'Колонна', 1, '310.0', '310.0'],
  ['К3-1', 'Колонна', 2, '367.8', '735.6'],
  ['П1-1', 'Прогон', 4, '22.7', '90.8'],
  ['П1-2', 'Прогон', 10, '23.4', '234.0'],
  ['П1-3', 'Прогон', 14, '48.0', '672.0'],
  ['П1-4', 'Прогон', 20, '48.7', '974.0'],
  ['П1-5', 'Прогон', 9, '49.1', '441.9'],
  ['Ст1-1', 'Стойка', 10, '26.0', '260.0'],
  ['Ст2-1', 'Стойка', 5, '24.7', '123.5'],
  ['Ст3-1', 'Стойка', 2, '18.7', '37.4'],
  ['ФИУ5-1', 'Деталь фахверка', 2, '3.6', '7.2'],
  ['ФИУ5-2', 'Деталь фахверка', 4, '7.3', '29.2'],
]

function MarksSheet() {
  return (
    <table className={sheetTable}>
      <colgroup>
        <col className="w-[26px]" /><col className="w-[256px]" /><col className="w-[154px]" /><col className="w-[84px]" />
        <col className="w-[48px]" /><col className="w-[46px]" /><col />
      </colgroup>
      <SheetHead letters={['B', 'C', 'D', 'E', 'F']} />
      <tbody>
        <tr className="h-5 font-bold">
          <th className={rowHead}>10</th>
          {['Отправочная марка', 'Наименование марки', 'Количество', '1 дет.', 'Всех'].map((h) => (
            <td key={h} className={line}>{h}</td>
          ))}
          <td />
        </tr>
        {marks.map((row, i) => (
          <tr key={row[0]} className="h-5 text-[#0000ff]">
            <th className={rowHead}>{i + 11}</th>
            {row.map((v, j) => (
              <td key={j} className={`bg-[#eff7ff] ${line}`}>{v}</td>
            ))}
            <td />
          </tr>
        ))}
        <tr className="h-5 text-[#0000ff]">
          <th className={rowHead}>43</th>
          <td colSpan={2} className="border-r border-b border-black p-0 pr-[2px] text-right text-black">Количество отправочных марок:</td>
          <td className={line}>173</td>
          <td className="border-r border-b border-black p-0 text-center text-black">Итого:</td>
          <td className={line}>8684.5</td>
          <td />
        </tr>
      </tbody>
    </table>
  )
}

const metal = [
  ['Гнз80Х80Х4', 'ГОСТ 30245-2003', '420.2', '420.9'],
  ['I20К1', 'СТО АСЧМ 20-93', '3386.7', '3387.2'],
  ['I25Б2', 'СТО АСЧМ 20-93', '459.8', '459.6'],
  ['I30Б2', 'СТО АСЧМ 20-93', '1003.5', '1003.8'],
  ['L100X10', 'ГОСТ 8509-93', '38.1', '37.8'],
  ['[16', 'ГОСТ 8240-97', '2414.5', '2412.7'],
  ['Лист толщиной 2.0 мм', 'ГОСТ 19903-74', '36.4', '36.4'],
  ['Лист толщиной 6.0 мм', 'ГОСТ 19903-74', '33.6', '35.7'],
  ['Лист толщиной 8.0 мм', 'ГОСТ 19903-74', '8.2', '8.4'],
  ['Лист толщиной 10.0 мм', 'ГОСТ 19903-74', '266.4', '263.6'],
  ['Лист толщиной 12.0 мм', 'ГОСТ 19903-74', '129.6', '162.4'],
  ['Лист толщиной 18.0 мм', 'ГОСТ 19903-74', '58.5', '58.4'],
  ['Лист толщиной 20.0 мм', 'ГОСТ 19903-74', '397.0', '397.6'],
]

const info: [string, ReactNode][] = [
  ['Номер проекта', '491/14 КМД (на основании чертежей 618-11-КМ)'],
  ['Название проекта', (
    <svg key="erased" viewBox="0 0 364 16" className="h-4 w-[364px]" aria-hidden="true">
      <path d="M101 3h3M106 3h2M145 2h6M218 2h6M254 3h2M110 14v3M174 9v4M178 9v4M183 9v4l3-4v4M190 9v4M195 12h4M204 12h5M233 12h3M238 13h3M243 13v3" stroke="#222" strokeWidth="1.3" fill="none" />
    </svg>
  )],
  ['Дата', '08.04.2014   22:15:35'],
  ['Разработал', ''],
]

function MetalSheet() {
  return (
    <table className={sheetTable}>
      <colgroup>
        <col className="w-[26px]" /><col className="w-[158px]" /><col className="w-[110px]" /><col className="w-[97px]" />
        <col className="w-[111px]" /><col className="w-[86px]" /><col />
      </colgroup>
      <SheetHead letters={['A', 'B', 'C', 'D', 'E']} />
      <tbody>
        <tr className="h-5 font-bold">
          <th className={rowHead}>1</th>
          <td colSpan={6} className="overflow-hidden border-b border-black bg-[#c4bd97] p-0">
            <div className="w-[624px] text-center">Информация о проекте</div>
          </td>
        </tr>
        {info.map(([label, value], i) => (
          <tr key={label} className="h-5">
            <th className={rowHead}>{i + 2}</th>
            <td colSpan={2} className={`bg-[#f2f2f2] font-bold ${line}`}>{label}</td>
            <td colSpan={4} className="overflow-hidden border-b border-black p-0">
              <div className="h-4 w-[364px] text-center whitespace-pre">{value}</div>
            </td>
          </tr>
        ))}
        <tr className="h-5">
          <th className={rowHead}>6</th>
          <td colSpan={5} className="border-b border-black p-0" />
          <td />
        </tr>
        <tr className="h-5 font-bold">
          <th className={rowHead}>7</th>
          <td colSpan={4} className={line}>Выборка металла для закупки</td>
          <td className={line} />
          <td />
        </tr>
        <tr className="h-5">
          <th className={rowHead}>8</th>
          {['Профиль', 'ГОСТ, ТУ...', 'Чистый вес ,кг', 'Вес заготовки,кг', 'Марка стали'].map((h) => (
            <td key={h} className={`bg-[#ffcc33] ${line}`}>{h}</td>
          ))}
          <td />
        </tr>
        {metal.map((row, i) => (
          <tr key={row[0]} className="h-5">
            <th className={i === 10 ? 'border-r-2 border-b border-r-[#217346] border-b-[#c4c4c4] bg-[#c8c8c8] p-0 text-center font-bold text-[#217346]' : rowHead}>{i + 9}</th>
            {row.map((v, j) => (
              <td key={j} className={`bg-[#b4b4b4] ${line}`}>{v}</td>
            ))}
            <td className={`bg-[#b4b4b4] ${line}`}>С245</td>
            <td />
          </tr>
        ))}
        <tr className="h-5 font-bold">
          <th className={rowHead}>22</th>
          <td colSpan={2} className="border-r border-b border-black bg-[#d8e4bc] p-0 pr-[5px] text-right">Итого:</td>
          <td className={`bg-[#d8e4bc] ${line}`}>8652.5</td>
          <td className={`bg-[#d8e4bc] ${line}`}>8684.5</td>
          <td className={`bg-[#d8e4bc] ${line}`} />
          <td />
        </tr>
        {Array.from({ length: 12 }, (_, i) => (
          <tr key={i} className="h-5">
            <th className={rowHead}>{i + 23}</th>
            <td colSpan={6} />
          </tr>
        ))}
      </tbody>
    </table>
  )
}

/* ---------- hand-drawn notes over the windows ---------- */

function Notes() {
  return (
    <div className="pointer-events-none absolute inset-0 font-['Open_Sans',sans-serif] text-[13px] leading-[18px] text-[#ed1c24]">
      <svg viewBox="0 0 1920 1080" className="absolute top-0 left-0 h-[1080px] w-[1920px]" fill="none" strokeLinejoin="round" strokeLinecap="square" aria-hidden="true">
        <g stroke="#ed1c24">
          <g strokeWidth="8" opacity=".75">
            <path d="M478 621L505 621 527 625 541 633 546 642 551 655 547 665 520 669 490 672 457 673 435 666 420 660 403 650 394 640 394 632 408 625 433 621 465 621z" />
            <path d="M1647 703L1625 699 1612 702 1604 713 1604 730 1617 739 1659 740 1670 732 1673 720 1670 710 1659 704 1646 701" />
          </g>
          <g strokeWidth="2">
            <path d="M560 676h28l4 3h12l20 7 16 3 8 1 24 6h23l14 5h19l17 7h21l11 3 19 3 25 2 21 4 21 4 25 2 21 5 34 3 25 4h47l6 2h340l13 4h134l17-2 18-5 49-3" />
            <path d="M1540 737l52 2M1541 739l16 18 15-11 20-8" />
            <path d="M1618 398l-4-10-1-8 5-4h10l6 3 5 7v14l-4 4-10 5-3 18" />
            <path d="M1720 394v-8l-4-3 6-5h6l5 4 7 6 1 11-1 7h-22l1 10" />
          </g>
          <path d="M1711 425h9M1620 434h4" strokeWidth="3" />
        </g>
        <g stroke="#22b14c">
          <g strokeWidth="8" opacity=".75">
            <path d="M1696 720L1692 708 1702 701 1723 698 1747 701 1774 705 1784 717 1782 733 1772 743 1735 750 1719 747 1702 733z" />
            <path d="M1209 953L1216 940 1238 936 1259 939 1269 950 1265 963 1250 967 1211 967z" />
          </g>
          <path d="M1280 946h92l30-1 31-4 45-4 49-3 24-6 41-6 45-7 37-6 24-6 37-11 24-10 17-9 13-13 13-27 5-23v-33l-14-26 9 40 0-5 12-4 9-5-15-10-15-16" strokeWidth="2" />
        </g>
      </svg>
      <p className="absolute top-[713px] left-[346px]">МОНТАЖНАЯ СХЕМА</p>
      <p className="absolute top-[770px] left-[1482px]">МОНТАЖНАЯ СХЕМА</p>
      <p className="absolute top-[776px] left-[1688px] text-[#22b14c]">ВЕДОМОСТЬ<br />ПОСТАВОК</p>
      <p className="absolute top-[831px] left-[1353px] font-['Lato',sans-serif] text-[17px] leading-6 text-[#3f48cc]">
        Вес в сборках соответствует весу<br />в ведомости отправочных марок
      </p>
    </div>
  )
}

/* ---------- taskbar ---------- */

const taskIcons: [string, ReactNode][] = [
  ['Google Chrome', <Glyph key="c"><circle cx="8" cy="8" r="7" fill="#e8402c" /><path d="M8 8L1.900 4.500A7 7 0 0 0 8 15z" fill="#30a048" /><path d="M8 8v7a7 7 0 0 0 6.500-9.500z" fill="#f8c820" /><circle cx="8" cy="8" r="3.200" fill="#3478e0" stroke="#fff" /></Glyph>],
  ['Total Commander', <Glyph key="t"><path d="M1 0h14v16H1z" fill="#2040d0" /><path d="M5 0h7v6H5z" fill="#d8e0f8" /><path d="M9 1h2v4H9z" fill="#2040d0" /><path d="M3 8h10v7H3z" fill="#fff" /><L d="M3 10h10M3 13h10" c="#e02020" w={1.200} /></Glyph>],
  ['AutoCAD', <Glyph key="a"><path d="M1 0h14v9H1z" fill="#d0d0d0" /><path d="M1 9h14v7H1z" fill="#e80c0c" /><text x="4" y="9" fill="#000" fontSize="11" fontFamily="Open Sans, sans-serif">A</text></Glyph>],
  ['Excel', <ExcelLogo key="x" size="h-[18px] w-[18px]" />],
  ['Tekla Structures', <TeklaLogo key="s" />],
]

function Taskbar() {
  return (
    <footer className="relative flex h-[30px] items-center bg-linear-to-r from-black via-[#111417] to-black pr-px text-white">
      <button type="button" aria-label="Пуск" className="absolute -top-[5px] left-[9px]">
        <svg viewBox="0 0 36 36" className="h-9 w-9" aria-hidden="true">
          <defs>
            <radialGradient id="orb" cx=".5" cy=".9" r=".9">
              <stop offset="0" stopColor="#30d0ff" /><stop offset=".5" stopColor="#1c6498" /><stop offset="1" stopColor="#88a8c4" />
            </radialGradient>
          </defs>
          <circle cx="18" cy="18" r="17.500" fill="url(#orb)" stroke="#1a3850" />
          <path d="M11 9c3-2 5-1 8 1l-2 7c-3-2-5-2-8-1z" fill="#f06428" />
          <path d="M20 11c3 2 5 2 8 0l-2 7c-3 2-5 1-8 0z" fill="#8cc83c" />
          <path d="M8.500 17.500c3-1.500 5-1 8 .5l-2 7c-3-2-5-2-8-1z" fill="#3c9ce8" />
          <path d="M17.500 19.500c3 1.500 5 2 8 0l-2 7c-3 2-5 1-8 0z" fill="#fcc828" />
        </svg>
      </button>
      <div className="ml-[60px] flex gap-1">
        {taskIcons.map(([name, icon], i) => (
          <button
            key={name}
            type="button"
            aria-label={name}
            className={i === 3
              ? 'flex h-7 w-[42px] items-center justify-center rounded-[3px] border border-r-4 border-double border-[#c8c8c8] bg-linear-to-br from-[#d8d8d8] to-[#8a8a8a]'
              : 'flex h-7 w-[42px] items-center justify-center rounded-[3px] border border-[#8a8a8a] bg-linear-to-br from-[#8c8c8c] to-[#1c1c1c]'}
          >
            {icon}
          </button>
        ))}
      </div>
      <div className="ml-auto flex items-center">
        <span className="mr-3 pb-1">RU</span>
        <svg viewBox="0 0 8 5" className="mr-3 h-[5px] w-2" aria-hidden="true"><path d="M4 0l4 5H0z" fill="#fff" /></svg>
        <span className="mr-2"><Glyph size="h-4 w-4"><L d="M5 5h10v7H5zM8 15h6M11 12v3M1 1v4h4V1M3 5v8h4" c="#eee" w={1.400} /></Glyph></span>
        <Glyph size="h-4 w-4"><path d="M1 5h3l4-4v14l-4-4H1z" fill="#fff" /><L d="M10 5c1.500 2 1.500 4 0 6M12 3c3 3 3 7 0 10" c="#ddd" /></Glyph>
        <time className="mr-5 ml-7">22:21</time>
        <button type="button" aria-label="Показать рабочий стол" className="h-7 w-[13px] border border-[#777] bg-linear-to-b from-[#777] to-[#111]" />
      </div>
    </footer>
  )
}

/* ---------- page ---------- */

const menu = ['Файл чертежа', 'Правка', 'Вид', 'Простановка размеров', 'Примечания', 'Формы', 'Инструменты', 'Окно', 'Справка']

export default function App() {
  return (
    <div className="min-h-screen bg-white pr-[424px] font-['Open_Sans',sans-serif] text-[11px]">
      <main className="relative flex flex-col overflow-hidden">
        <header className="relative flex h-[21px] items-center bg-linear-to-r from-[#b8b8b8] via-[#1c1c1c] via-40% to-[#3a3a3a]">
          <TeklaLogo />
          <h1 className="ml-1 text-black">Tekla Structures x64</h1>
          <svg viewBox="0 0 276 20" className="absolute top-0 left-[127px] h-5 w-[276px]" aria-hidden="true">
            <path d="M0 1L25 3 48 5 55 0H85l8 3 20 2 30 3 36-3 60-2h20l15 3v9l-16 1-90 1-35 1-40 3H52l-17-2-15-2H0z" fill="#fff" />
            <path d="M62 8h4v2M69 9h6M132 7h5" stroke="#111" fill="none" />
          </svg>
          <div className="absolute top-0 right-[3px] flex h-[17px] rounded-b border border-t-0 border-[#888] bg-[#3a3a3a]">
            {[
              ['Свернуть приложение', 'M3 10h10v2H3z', 'w-[28px]'],
              ['Восстановить приложение', 'M2 5h8v8H2zM5 5V2h8v8h-3', 'w-[27px]'],
              ['Закрыть приложение', 'M4 3l8 10M12 3L4 13', 'w-[47px]'],
            ].map(([name, d, w]) => (
              <button key={name} type="button" aria-label={name} className={`flex items-center justify-center border-r border-[#777] last:border-r-0 ${w}`}>
                <Glyph size="h-[13px] w-[13px]"><L d={d} c="#fff" w={2} /></Glyph>
              </button>
            ))}
          </div>
        </header>
        <nav className="flex h-[22px] items-center gap-4 border-t border-b border-t-[#333] border-b-[#999] bg-linear-to-b from-white via-[#d6dcef] via-40% to-[#e0e5f5] pl-[7px] text-[#6d6d6d]">
          {menu.map((m) => (
            <button key={m} type="button" className="whitespace-nowrap">{m}</button>
          ))}
        </nav>
        <div className="flex h-[27px] items-center border-t border-b-2 border-t-white border-b-[#777] bg-linear-to-b from-[#f4f6fc] to-[#d8def0]">
          <div className="flex h-full items-center border-r border-[#999] bg-[#f0f0f0]">
            <Toolbar tools={topTools} />
          </div>
        </div>

        <div className="flex h-[933px] bg-linear-to-b from-black via-[#808080] to-[#f2f2f2] pr-[2px] pl-[2px]">
          <div className="flex flex-col">
            <div className="flex flex-1 flex-col [&>section]:flex-1"><DrawingWindow /></div>
            <div className="-mr-[10px] h-[37px] border-l-[7px] border-[#d6e3f1] bg-linear-to-b from-[#e9e9e9] to-[#f4f4f4]" />
          </div>
          <div className="flex-1" />
          <div className="w-[14px] bg-[#d4d4d4] pt-[18px]">
            <div className="h-[830px] rounded-sm border border-[#888] bg-linear-to-r from-[#eee] to-[#999]" />
          </div>
        </div>

        <div className="flex h-[28px] items-center border-t border-b border-t-white border-b-[#999] bg-linear-to-b from-[#f4f6fc] to-[#d8def0]">
          <div className="flex h-full items-center border-r border-[#999] bg-[#f0f0f0] pr-[3px]">
            <Toolbar tools={bottomTools} />
            <label className="relative ml-1 flex items-center">
              <select aria-label="Единицы привязки" className="h-[19px] w-[86px] appearance-none bg-white pl-1" defaultValue="auto">
                <option value="auto">Авто</option>
              </select>
              <span className="absolute right-2"><Caret tone="text-black" /></span>
            </label>
            <label className="relative ml-[2px] flex items-center">
              <select aria-label="Плоскость" className="h-[19px] w-[130px] appearance-none bg-white pl-1" defaultValue="view">
                <option value="view">Плоскость вида</option>
              </select>
              <span className="absolute right-2"><Caret tone="text-black" /></span>
            </label>
          </div>
        </div>

        <div className="flex h-[19px] items-center border-t border-b-2 border-t-white border-b-[#444] bg-[#f0ecec] pl-[2px] text-black">
          <span className="flex-1 text-xs">Выбор пересечением: неактивный</span>
          <span className="flex w-24 gap-[42px] border-l border-[#d4d4d4] pl-[13px]"><span>S</span><span>0</span></span>
          <span className="w-[53px] overflow-hidden border-l border-[#d4d4d4] pl-1 whitespace-nowrap">Панорамирование</span>
          <span className="w-[227px] border-l border-[#d4d4d4] pl-1">Текущая стадия: 1</span>
          <span className="w-[174px] border-l border-[#d4d4d4] pl-1">0 + 0 выбрано объектов:</span>
        </div>
        <Taskbar />

        <ExcelWindow
          title="А_Ведомость отправочных марок - Excel"
          place="top-[71px] left-[646px] w-[646px]"
          dim
          cellRef="F10"
          formula="Всех"
          sheet="А_Ведомость отправочных марок"
          sheetTab="w-[218px] pl-3 mr-[33px]"
          vThumb={<><div className="h-[141px]" /><div className="flex-1 border border-[#ababab] bg-white" /></>}
          hThumb={<><div className="w-6" /><div className="w-[142px] border border-[#ababab] bg-white" /><div className="flex-1" /></>}
        >
          <MarksSheet />
        </ExcelWindow>
        <ExcelWindow
          title="М_Ведомость металла - Excel"
          place="top-[70px] left-[1295px] w-[613px]"
          cellRef="I19"
          formula=""
          scrolled
          sheet="М_Ведомость металла"
          sheetTab="w-[165px] pl-3 mr-[33px]"
          vThumb={<><div className="flex-1 border border-[#ababab] bg-white" /><div className="h-[21px]" /></>}
          hThumb={<><div className="w-[132px] border border-[#ababab] bg-white" /><div className="flex-1" /></>}
        >
          <MetalSheet />
        </ExcelWindow>

        <Notes />
      </main>
    </div>
  )
}
